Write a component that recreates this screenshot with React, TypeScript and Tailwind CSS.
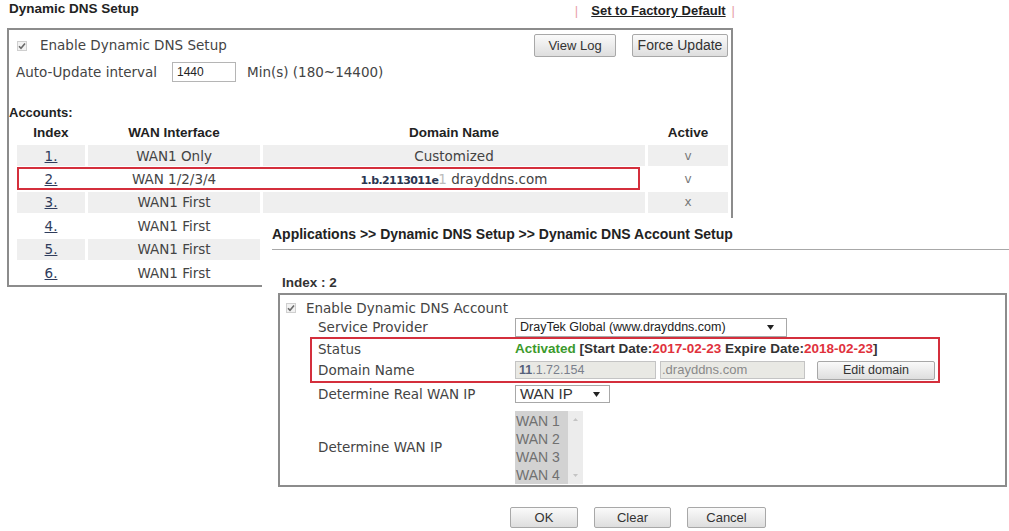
import React from "react";

const Check = () => (
  <svg width="10" height="10" viewBox="0 0 10 10" className="shrink-0">
    <rect x="0.5" y="0.5" width="9" height="9" fill="#f2f2f2" stroke="#cfcfcf" />
    <path d="M2 5.2 L4 7.3 L8 2.5" fill="none" stroke="#6a6a6a" strokeWidth="1.6" />
  </svg>
);

const Arrow = () => (
  <svg width="7" height="5" viewBox="0 0 7 5" className="shrink-0">
    <path d="M0 0 L7 0 L3.5 5 Z" fill="#222" />
  </svg>
);

const verdana = "font-['DejaVu_Sans',sans-serif]";
const arial = "font-['Liberation_Sans',Arial,sans-serif]";

const btn =
  "flex items-center justify-center border border-[#a8a8a8] rounded-[2px] bg-gradient-to-b from-[#fafafa] to-[#dedede] text-[#333] " +
  arial;

type Row = { idx: string; wan: string; domain: React.ReactNode; active: string };

const rows: Row[] = [
  { idx: "1.", wan: "WAN1 Only", domain: "Customized", active: "v" },
  {
    idx: "2.",
    wan: "WAN 1/2/3/4",
    domain: (
      <span>
        <span className="font-bold text-[#2a3550] text-[11px] tracking-[-0.6px]">1.b.2113011e</span>
        <span className="text-[#bbb]">1</span> drayddns.com
      </span>
    ),
    active: "v",
  },
  { idx: "3.", wan: "WAN1 First", domain: "", active: "x" },
  { idx: "4.", wan: "WAN1 First", domain: "", active: "" },
  { idx: "5.", wan: "WAN1 First", domain: "", active: "" },
  { idx: "6.", wan: "WAN1 First", domain: "", active: "" },
];

export default function App() {
  return (
    <div className="relative w-[1009px] h-[531px] overflow-hidden bg-white text-[#444]">
      {/* Top panel */}
      <div className="ml-[7px] w-[728px]">
        <div className="h-[28px] flex items-start justify-between">
          <div className={`${arial} font-bold text-[13.5px] leading-[16px] mt-[1px] ml-[2px] text-[#222]`}>
            Dynamic DNS Setup
          </div>
          <div className={`${arial} font-bold text-[13px] leading-[16px] mt-[3px] flex items-center`}>
            <span className="text-[#e8a0a8] font-normal mr-[13px]">|</span>
            <span className="underline text-[#222]">Set to Factory Default</span>
            <span className="text-[#e8a0a8] font-normal ml-[6px]">|</span>
          </div>
        </div>
        <div className="w-[726px] h-[259px] border-2 border-[#8c8c8c]">
          <div className="mt-[4px] h-[23px] flex items-center justify-between pl-[8px] pr-[3px]">
            <div className={`flex items-center gap-[13px] ${verdana} text-[13.5px] text-[#444]`}>
              <Check />
              <span>Enable Dynamic DNS Setup</span>
            </div>
            <div className="flex gap-[16px]">
              <div className={`${btn} w-[82px] h-[23px] text-[13px]`}>View Log</div>
              <div className={`${btn} w-[96px] h-[23px] text-[14px]`}>Force Update</div>
            </div>
          </div>
          <div className={`mt-[5px] h-[20px] flex items-center pl-[7px] ${verdana} text-[13.5px] text-[#444]`}>
            <span className="w-[156px]">Auto-Update interval</span>
            <div className={`w-[64px] h-[20px] border border-[#b5b5b5] flex items-center pl-[4px] ${arial} text-[12px] text-[#222]`}>
              1440
            </div>
            <span className="ml-[11px]">Min(s) (180~14400)</span>
          </div>
          <div className={`mt-[23px] h-[16px] leading-[16px] ${arial} font-bold text-[13px] text-[#222]`}>
            Accounts:
          </div>
          <div className="ml-[8px] mt-[2px] w-[711px]">
            <div
              className={`grid grid-cols-[68px_172px_382px_80px] gap-x-[3px] h-[18px] items-center ${arial} font-bold text-[13.5px] text-[#222] text-center`}
            >
              <span>Index</span>
              <span>WAN Interface</span>
              <span>Domain Name</span>
              <span>Active</span>
            </div>
            <div className="mt-[4px] flex flex-col gap-y-[2px]">
              {rows.map((r, i) => {
                const bg = i % 2 === 0 ? "bg-[#efefef]" : "bg-white";
                return (
                  <div
                    key={r.idx}
                    className={`relative grid grid-cols-[68px_172px_382px_80px] gap-x-[3px] h-[21.4px] ${verdana} text-[13.5px] text-[#444]`}
                  >
                    <div className={`${bg} flex items-center justify-center`}>
                      <span className="underline text-[#2f3c5c]">{r.idx}</span>
                    </div>
                    <div className={`${bg} flex items-center justify-center`}>{r.wan}</div>
                    <div className={`${bg} flex items-center justify-center`}>{r.domain}</div>
                    <div className={`${bg} flex items-center justify-center text-[#777] text-[12px]`}>{r.active}</div>
                    {i === 1 && (
                      <div className="absolute left-0 top-[-1px] w-[623px] h-[23px] border-2 border-[#d42f3c]" />
                    )}
                  </div>
                );
              })}
            </div>
          </div>
        </div>
      </div>

      {/* Overlay: account setup */}
      <div className="absolute left-[262px] top-[218px] right-0 bottom-0 bg-white">
        <div className={`mt-[8px] ml-[10px] h-[16px] leading-[16px] ${arial} font-bold text-[14px] text-[#222]`}>
          Applications &gt;&gt; Dynamic DNS Setup &gt;&gt; Dynamic DNS Account Setup
        </div>
        <div className="mt-[7px] ml-[10px] h-px bg-[#a8a8a8]" />
        <div className={`mt-[25px] ml-[20px] h-[16px] leading-[16px] ${arial} font-bold text-[13.5px] text-[#333]`}>
          Index : 2
        </div>
        <div className={`mt-[2px] ml-[16px] w-[729px] h-[194px] border-2 border-[#8c8c8c] ${verdana} text-[13.5px] text-[#444]`}>
          <div className="mt-[4px] h-[18px] flex items-center pl-[6px] gap-[10px]">
            <Check />
            <span>Enable Dynamic DNS Account</span>
          </div>
          <div className="h-[20px] flex items-center pl-[38px]">
            <span className="w-[197px]">Service Provider</span>
            <div className={`w-[272px] h-[19px] border border-[#a8a8a8] flex items-center justify-between pl-[4px] pr-[12px] ${arial} text-[12.5px] text-[#222]`}>
              <span>DrayTek Global (www.drayddns.com)</span>
              <Arrow />
            </div>
          </div>
          <div className="ml-[30px] w-[630px] h-[46px] border-2 border-[#d42f3c]">
            <div className="h-[20px] flex items-center pl-[6px]">
              <span className="w-[197px]">Status</span>
              <span className={`${arial} font-bold text-[13.5px] text-[#333]`}>
                <span className="text-[#3c9a2c]">Activated</span> [Start Date:
                <span className="text-[#e0313c]">2017-02-23</span> Expire Date:
                <span className="text-[#e0313c]">2018-02-23</span>]
              </span>
            </div>
            <div className="h-[22px] flex items-center pl-[6px]">
              <span className="w-[197px]">Domain Name</span>
              <div className={`w-[141px] h-[18px] border border-[#c4c4c4] bg-[#e9e9e4] flex items-center pl-[3px] ${arial} text-[12.5px] text-[#7a7f8c]`}>
                <span className="font-bold text-[#55607a]">11</span>.1.72.154
              </div>
              <div className={`ml-[4px] w-[145px] h-[18px] border border-[#c4c4c4] bg-[#e9e9e4] flex items-center pl-[1px] ${arial} text-[13px] text-[#8a8a8a]`}>
                .drayddns.com
              </div>
              <div className={`${btn} ml-[12px] w-[118px] h-[19px] text-[12.5px]`}>Edit domain</div>
            </div>
          </div>
          <div className="h-[22px] flex items-center pl-[38px]">
            <span className="w-[197px]">Determine Real WAN IP</span>
            <div className={`w-[95px] h-[18px] border border-[#a8a8a8] flex items-center justify-between pl-[4px] pr-[9px] ${arial} text-[15px] text-[#333]`}>
              <span>WAN IP</span>
              <Arrow />
            </div>
          </div>
          <div className="mt-[6px] h-[73px] flex items-center pl-[38px]">
            <span className="w-[197px]">Determine WAN IP</span>
            <div className="w-[68px] h-[73px] flex bg-[#ececec]">
              <div className={`w-[53px] bg-[#d2d2d2] flex flex-col justify-center pl-[1px] ${arial} text-[14px] leading-[18px] text-[#707070]`}>
                <span>WAN 1</span>
                <span>WAN 2</span>
                <span>WAN 3</span>
                <span>WAN 4</span>
              </div>
              <div className="flex-1 flex flex-col items-center justify-between py-[7px]">
                <svg width="5" height="3" viewBox="0 0 5 3"><path d="M0 3 L2.5 0 L5 3 Z" fill="#c4c4c4" /></svg>
                <svg width="5" height="3" viewBox="0 0 5 3"><path d="M0 0 L2.5 3 L5 0 Z" fill="#c4c4c4" /></svg>
              </div>
            </div>
          </div>
        </div>
        <div className="mt-[20px] pl-[248px] flex gap-[16px]">
          <div className={`${btn} w-[68px] h-[21px] text-[13px]`}>OK</div>
          <div className={`${btn} w-[77px] h-[21px] text-[13px]`}>Clear</div>
          <div className={`${btn} w-[79px] h-[21px] text-[13px]`}>Cancel</div>
        </div>
      </div>
    </div>
  );
}
